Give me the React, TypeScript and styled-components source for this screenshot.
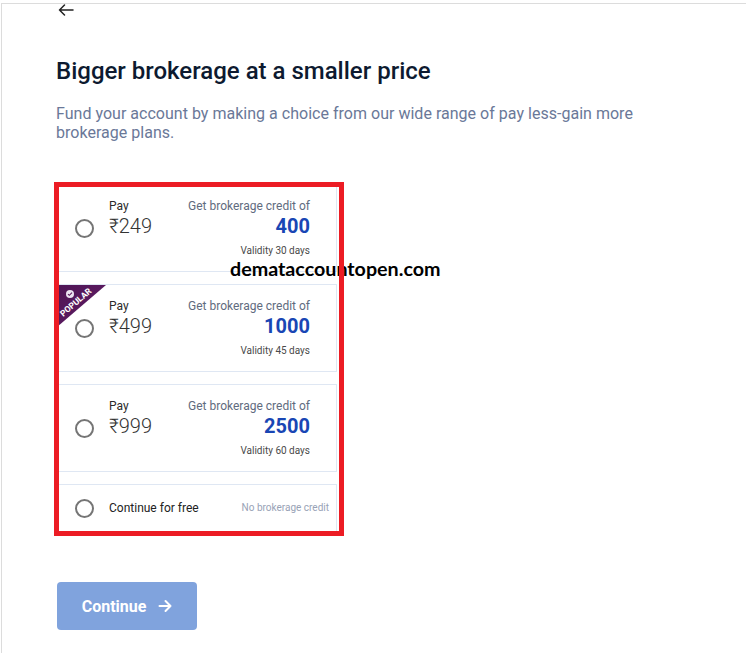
import React from "react";
import styled, { createGlobalStyle } from "styled-components";

const GlobalStyle = createGlobalStyle`
  html, body { margin: 0; padding: 0; background: #ffffff; }
  body { font-family: Roboto, "Noto Sans", "DejaVu Sans", sans-serif; color: #222; }
`;

const Frame = styled.div`
  position: relative;
  box-sizing: border-box;
  height: 650px;
  margin: 3px 0 0 1px;
  border-top: 1px solid #dcdcdc;
  border-left: 1px solid #dcdcdc;
  overflow: hidden;
`;

const Content = styled.main`
  padding-left: 54px;
  display: flex;
  flex-direction: column;
  align-items: flex-start;
`;

const BackButton = styled.button`
  all: unset;
  display: block;
  margin-left: 2px;
  width: 16px;
  height: 12px;
  color: #222;
  cursor: pointer;
  svg { display: block; }
`;

const Title = styled.h1`
  margin: 39px 0 0;
  font-size: 24px;
  line-height: 32px;
  font-weight: 500;
  color: #0d1a30;
`;

const Lead = styled.p`
  margin: 17px 0 0;
  width: 600px;
  font-size: 16px;
  line-height: 19px;
  font-weight: 400;
  letter-spacing: 0.02px;
  color: #6a7898;
`;

const PlanList = styled.div`
  position: relative;
  margin-top: 42px;
  width: 281px;
  display: flex;
  flex-direction: column;
  gap: 12px;
`;

const Annotation = styled.div`
  position: absolute;
  top: -2px;
  left: -2px;
  right: -7px;
  bottom: -4px;
  border: 5px solid #ec1c24;
  pointer-events: none;
  z-index: 3;
`;

const PlanCard = styled.label<{ $compact?: boolean }>`
  position: relative;
  box-sizing: border-box;
  display: flex;
  align-items: center;
  gap: 15px;
  height: ${(p) => (p.$compact ? 48 : 88)}px;
  padding: 0 ${(p) => (p.$compact ? 7 : 26)}px 0 18px;
  border: 1px solid #dfe7f3;
  background: #fff;
  overflow: hidden;
`;

const Radio = styled.span`
  flex: none;
  box-sizing: border-box;
  width: 19px;
  height: 19px;
  border: 2px solid #757575;
  border-radius: 50%;
`;

const PlanBody = styled.div<{ $center?: boolean }>`
  flex: 1;
  display: flex;
  justify-content: space-between;
  align-items: ${(p) => (p.$center ? "center" : "flex-start")};
`;

const Column = styled.div<{ $right?: boolean }>`
  display: flex;
  flex-direction: column;
  align-items: ${(p) => (p.$right ? "flex-end" : "flex-start")};
  text-align: ${(p) => (p.$right ? "right" : "left")};
`;

const Caption = styled.span<{ $muted?: boolean }>`
  font-size: 12px;
  line-height: 16px;
  color: ${(p) => (p.$muted ? "#5f6b7e" : "#2b2b2b")};
`;

const Price = styled.span`
  font-size: 20px;
  line-height: 24px;
  font-weight: 300;
  color: #333;
`;

const Credit = styled.span`
  font-size: 20px;
  line-height: 24px;
  font-weight: 700;
  color: #1946b4;
`;

const Validity = styled.span`
  margin-top: 6px;
  font-size: 10px;
  line-height: 14px;
  color: #4a4a4a;
`;

const FreeLabel = styled.span`
  font-size: 12px;
  line-height: 16px;
  color: #222;
`;

const NoCredit = styled.span`
  font-size: 10px;
  line-height: 14px;
  color: #98a2b6;
`;

const Ribbon = styled.div`
  position: absolute;
  top: 0;
  left: 0;
  width: 49px;
  height: 42px;
  background: linear-gradient(135deg, #4e1555 0%, #621d66 100%);
  clip-path: polygon(0 0, 100% 0, 0 100%);
`;

const RibbonText = styled.span`
  position: absolute;
  left: -4px;
  top: 13px;
  width: 46px;
  text-align: center;
  font-size: 8.5px;
  line-height: 9px;
  font-weight: 700;
  color: #fff;
  transform: rotate(-41deg);
`;

const RibbonBadge = styled.span`
  position: absolute;
  left: 9px;
  top: 5px;
  width: 8px;
  height: 8px;
  border-radius: 50%;
  background: #ece4f2;
  display: flex;
  align-items: center;
  justify-content: center;
  svg { display: block; }
`;

const ContinueButton = styled.button`
  all: unset;
  box-sizing: border-box;
  margin: 50px 0 0 1px;
  width: 140px;
  height: 48px;
  border-radius: 4px;
  background: #80a3dd;
  color: #fff;
  display: flex;
  align-items: center;
  justify-content: center;
  gap: 12px;
  font-family: Roboto, "Noto Sans", sans-serif;
  font-size: 16px;
  font-weight: 700;
  svg { display: block; }
`;

const Watermark = styled.div`
  position: absolute;
  left: 228px;
  top: 255px;
  font-family: Lato, "Open Sans", sans-serif;
  font-size: 19.7px;
  line-height: 20px;
  font-weight: 700;
  color: #000;
  z-index: 2;
`;

type Plan = { pay: string; credit: string; validity: string; popular?: boolean };

const plans: Plan[] = [
  { pay: "₹249", credit: "400", validity: "Validity 30 days" },
  { pay: "₹499", credit: "1000", validity: "Validity 45 days", popular: true },
  { pay: "₹999", credit: "2500", validity: "Validity 60 days" },
];

const ArrowLeft = () => (
  <svg width="16" height="12" viewBox="0 0 16 12" fill="none" stroke="currentColor" strokeWidth="1.5" strokeLinecap="round" strokeLinejoin="round">
    <path d="M15 6H1.5M6.5 1L1.5 6l5 5" />
  </svg>
);

const ArrowRight = () => (
  <svg width="14" height="14" viewBox="0 0 14 14" fill="none" stroke="currentColor" strokeWidth="2" strokeLinecap="round" strokeLinejoin="round">
    <path d="M1.5 7h11M7.5 2l5 5-5 5" />
  </svg>
);

export default function App() {
  return (
    <>
      <GlobalStyle />
      <Frame>
        <Content>
          <BackButton aria-label="Back">
            <ArrowLeft />
          </BackButton>
          <Title>Bigger brokerage at a smaller price</Title>
          <Lead>
            Fund your account by making a choice from our wide range of pay less-gain more brokerage plans.
          </Lead>
          <PlanList>
            {plans.map((p) => (
              <PlanCard key={p.pay}>
                {p.popular && (
                  <Ribbon>
                    <RibbonBadge>
                      <svg width="6" height="6" viewBox="0 0 6 6" fill="none" stroke="#5a1a5e" strokeWidth="1.1">
                        <path d="M1 3.1l1.3 1.2L5 1.6" />
                      </svg>
                    </RibbonBadge>
                    <RibbonText>POPULAR</RibbonText>
                  </Ribbon>
                )}
                <Radio />
                <PlanBody>
                  <Column>
                    <Caption>Pay</Caption>
                    <Price>{p.pay}</Price>
                  </Column>
                  <Column $right>
                    <Caption $muted>Get brokerage credit of</Caption>
                    <Credit>{p.credit}</Credit>
                    <Validity>{p.validity}</Validity>
                  </Column>
                </PlanBody>
              </PlanCard>
            ))}
            <PlanCard $compact>
              <Radio />
              <PlanBody $center>
                <FreeLabel>Continue for free</FreeLabel>
                <NoCredit>No brokerage credit</NoCredit>
              </PlanBody>
            </PlanCard>
            <Annotation />
          </PlanList>
          <ContinueButton>
            Continue
            <ArrowRight />
          </ContinueButton>
        </Content>
        <Watermark>demataccountopen.com</Watermark>
      </Frame>
    </>
  );
}
